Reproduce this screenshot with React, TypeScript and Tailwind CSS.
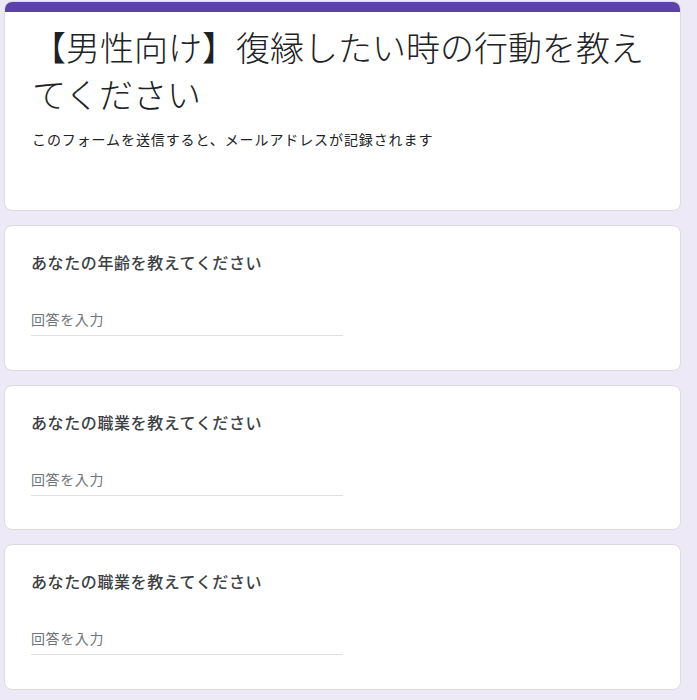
const font = {
  fontFamily: '"Noto Sans CJK JP", "Noto Sans", sans-serif',
};

function QuestionCard({ label }: { label: string }) {
  return (
    <div className="h-[145.5px] rounded-lg border border-[#dadce0] bg-white px-[26px] pt-[24px]">
      <div className="text-[16px] font-medium leading-6 tracking-[0.6px] text-[#3c4043]">
        {label}
      </div>
      <div className="mt-[32px] w-[312px] border-b border-[#e0e0e0] pb-[5px]">
        <span className="text-[14px] leading-5 tracking-[0.6px] text-[#70757a]">
          回答を入力
        </span>
      </div>
    </div>
  );
}

export default function App() {
  return (
    <div
      className="min-h-[700px] w-[697px] bg-[#ede9f6] pt-px pl-[4px] pr-[16px] pb-4"
      style={font}
    >
      <div className="flex flex-col gap-[14px]">
        <div className="h-[210px] overflow-hidden rounded-lg border border-[#dadce0] bg-white">
          <div className="h-[10px] bg-[#5b42ab]" />
          <div className="px-[27px] pt-[11px]">
            <h1 className="text-[34px] font-light leading-[47px] text-[#202124]">
              【男性向け】復縁したい時の行動を教えてください
            </h1>
            <p className="mt-[12px] text-[14px] leading-5 tracking-[0.9px] text-[#202124]">
              このフォームを送信すると、メールアドレスが記録されます
            </p>
          </div>
        </div>
        <QuestionCard label="あなたの年齢を教えてください" />
        <QuestionCard label="あなたの職業を教えてください" />
        <QuestionCard label="あなたの職業を教えてください" />
      </div>
    </div>
  );
}
